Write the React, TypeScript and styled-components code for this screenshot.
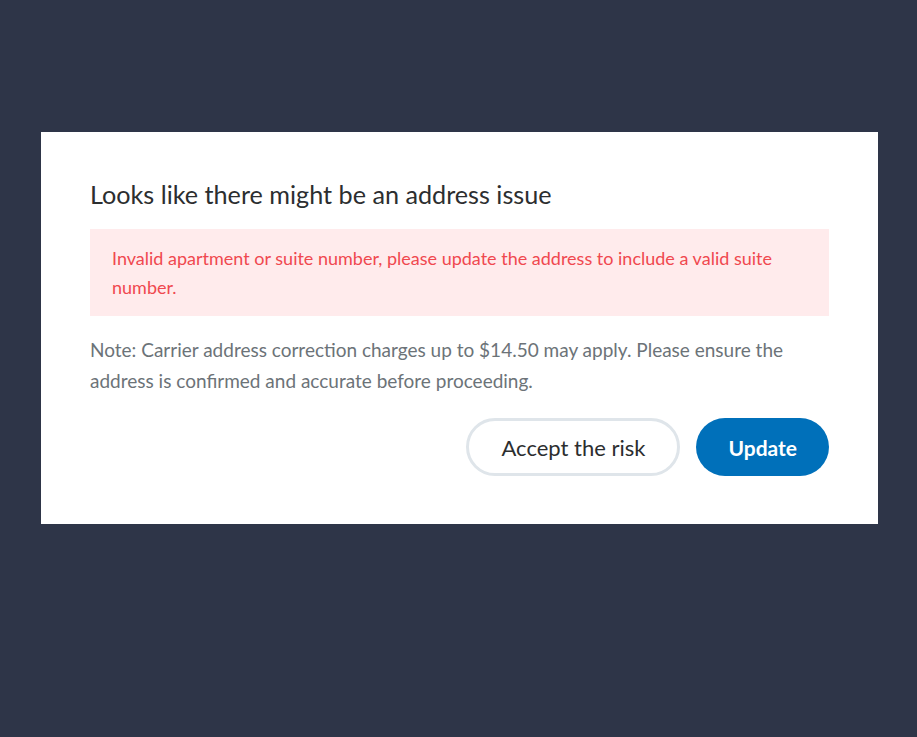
import styled, { createGlobalStyle } from "styled-components";

const GlobalStyle = createGlobalStyle`
  html, body {
    margin: 0;
    padding: 0;
    background: #2e3548;
  }
  body {
    font-family: Lato, "Noto Sans", sans-serif;
  }
`;

const Backdrop = styled.div`
  width: 917px;
  height: 737px;
  padding: 132px 39px 0 41px;
  box-sizing: border-box;
  background: #2e3548;
`;

const Modal = styled.div`
  background: #ffffff;
  width: 837px;
  box-sizing: border-box;
  padding: 46px 49px 48px 49px;
  display: flex;
  flex-direction: column;
`;

const Title = styled.h2`
  margin: 0 0 19px;
  font-size: 25.2px;
  line-height: 32px;
  font-weight: 400;
  color: #2c2e2f;
`;

const Alert = styled.div`
  background: #ffebec;
  color: #f0484f;
  font-size: 18px;
  line-height: 29px;
  padding: 15px 22px 14px;
`;

const Note = styled.p`
  margin: 18px 0 0;
  font-size: 19px;
  line-height: 31px;
  color: #6c7378;
`;

const Actions = styled.div`
  display: flex;
  justify-content: flex-end;
  gap: 16px;
  margin-top: 22px;
`;

const Button = styled.button<{ $primary?: boolean }>`
  height: 58px;
  border-radius: 29px;
  font-family: inherit;
  font-size: ${p => (p.$primary ? "21px" : "22px")};
  cursor: pointer;
  box-sizing: border-box;
  padding: 0 32px;
  font-weight: ${p => (p.$primary ? 700 : 400)};
  color: ${p => (p.$primary ? "#ffffff" : "#2c2e2f")};
  background: ${p => (p.$primary ? "#0070ba" : "#ffffff")};
  border: ${p => (p.$primary ? "none" : "3px solid #dfe5ea")};
  min-width: ${p => (p.$primary ? "132px" : "214px")};
`;

const App = () => {
  return (
    <>
      <GlobalStyle />
      <Backdrop>
        <Modal>
          <Title>Looks like there might be an address issue</Title>
          <Alert>
            Invalid apartment or suite number, please update the address to
            include a valid suite number.
          </Alert>
          <Note>
            Note: Carrier address correction charges up to $14.50 may apply.
            Please ensure the address is confirmed and accurate before
            proceeding.
          </Note>
          <Actions>
            <Button>Accept the risk</Button>
            <Button $primary>Update</Button>
          </Actions>
        </Modal>
      </Backdrop>
    </>
  );
};

export default App;
